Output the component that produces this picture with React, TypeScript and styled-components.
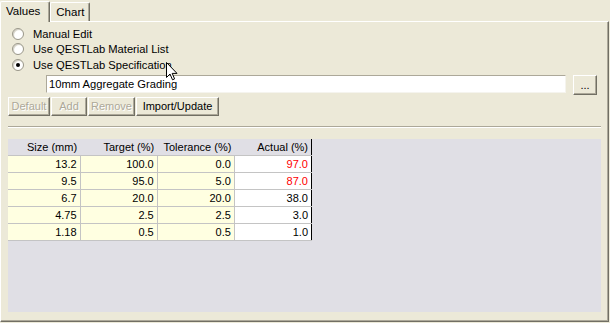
import React, { FC } from 'react'
import styled, { createGlobalStyle } from 'styled-components'

const color = {
  face: '#ece9d8',
  shadow: '#aca899',
  dark: '#716f64',
  white: '#ffffff',
  grid: '#e0dfe5',
  yellow: '#ffffe1',
  line: '#c4c4c4',
  disabled: '#aca899',
  red: '#ff0000',
}

const GlobalStyle = createGlobalStyle`
  html, body {
    margin: 0;
    padding: 0;
    background: ${color.face};
  }
  body {
    font-family: Tahoma, 'Liberation Sans', Arial, sans-serif;
    font-size: 11px;
    color: #000;
  }
`

type Row = { size: string; target: string; tolerance: string; actual: string; fail?: boolean }

const rows: Row[] = [
  { size: '13.2', target: '100.0', tolerance: '0.0', actual: '97.0', fail: true },
  { size: '9.5', target: '95.0', tolerance: '5.0', actual: '87.0', fail: true },
  { size: '6.7', target: '20.0', tolerance: '20.0', actual: '38.0' },
  { size: '4.75', target: '2.5', tolerance: '2.5', actual: '3.0' },
  { size: '1.18', target: '0.5', tolerance: '0.5', actual: '1.0' },
]

const options = ['Manual Edit', 'Use QESTLab Material List', 'Use QESTLab Specification']

const App: FC = () => {
  return (
    <Window>
      <GlobalStyle />
      <TabStrip>
        <Tab active>Values</Tab>
        <Tab>Chart</Tab>
      </TabStrip>
      <Panel>
        <RadioGroup>
          {options.map((label, i) => (
            <RadioRow key={label}>
              <Radio checked={i === 2} />
              <span>{label}</span>
            </RadioRow>
          ))}
        </RadioGroup>
        <SpecRow>
          <TextBox>10mm Aggregate Grading</TextBox>
          <Button width={24} height={20}>...</Button>
        </SpecRow>
        <ButtonRow>
          <Button width={42} disabled>Default</Button>
          <Button width={36} disabled>Add</Button>
          <Button width={47} disabled>Remove</Button>
          <Button width={83}>Import/Update</Button>
        </ButtonRow>
        <Separator />
        <GridArea>
          <Table>
            <colgroup>
              <col style={{ width: 72 }} />
              <col style={{ width: 77 }} />
              <col style={{ width: 77 }} />
              <col style={{ width: 77 }} />
            </colgroup>
            <thead>
              <tr>
                <Head>Size (mm)</Head>
                <Head>Target (%)</Head>
                <Head>Tolerance (%)</Head>
                <Head>Actual (%)</Head>
              </tr>
            </thead>
            <tbody>
              {rows.map((r) => (
                <tr key={r.size}>
                  <Cell>{r.size}</Cell>
                  <Cell>{r.target}</Cell>
                  <Cell>{r.tolerance}</Cell>
                  <Cell white fail={r.fail}>{r.actual}</Cell>
                </tr>
              ))}
            </tbody>
          </Table>
        </GridArea>
      </Panel>
      <Cursor width="12" height="19" viewBox="0 0 12 19">
        <path
          d="M0.5 0.5 L0.5 15.5 L4 12 L6.5 17.8 L8.6 16.9 L6.2 11.4 L11 11.4 Z"
          fill="#fff"
          stroke="#000"
          strokeWidth="1"
        />
      </Cursor>
    </Window>
  )
}

export default App

const Window = styled.div`
  position: relative;
  width: 610px;
  height: 323px;
  display: flex;
  flex-direction: column;
  overflow: hidden;
`

const TabStrip = styled.div`
  display: flex;
  align-items: flex-end;
  height: 21px;
  padding-left: 0;
  position: relative;
  z-index: 1;
`

const Tab = styled.div<{ active?: boolean }>`
  box-sizing: border-box;
  height: ${({ active }) => (active ? 21 : 19)}px;
  margin-bottom: ${({ active }) => (active ? -1 : 0)}px;
  padding: ${({ active }) => (active ? '2px 9px 0 5px' : '2px 5px 0 5px')};
  background: ${color.face};
  border-top: 1px solid ${color.white};
  border-left: 1px solid ${color.white};
  border-right: 1px solid ${color.dark};
  box-shadow: inset -1px 0 0 ${color.shadow};
  border-radius: 2px 2px 0 0;
  line-height: 15px;
  font-size: 11.5px;
`

const Panel = styled.div`
  flex: 1;
  box-sizing: border-box;
  display: flex;
  flex-direction: column;
  border-top: 1px solid ${color.white};
  border-left: 1px solid ${color.white};
  border-right: 1px solid ${color.dark};
  border-bottom: 1px solid ${color.dark};
  box-shadow: inset -1px -1px 0 ${color.shadow};
  padding: 4px 7px 9px 7px;
  margin-right: 1px;
  margin-bottom: 1px;
`

const RadioGroup = styled.div`
  display: flex;
  flex-direction: column;
  padding-left: 4px;
`

const RadioRow = styled.label`
  display: flex;
  align-items: center;
  gap: 9px;
  height: 15.5px;
  white-space: nowrap;
  font-size: 11.2px;
`

const Radio = styled.span<{ checked?: boolean }>`
  box-sizing: border-box;
  width: 12px;
  height: 12px;
  border-radius: 50%;
  background: radial-gradient(circle at 60% 60%, #ffffff 45%, #e2e0d6 100%);
  border: 1px solid #9a978a;
  box-shadow: inset 1px 1px 0 #d6d3c8;
  position: relative;
  &::after {
    content: '';
    display: ${({ checked }) => (checked ? 'block' : 'none')};
    position: absolute;
    left: 3px;
    top: 3px;
    width: 4px;
    height: 4px;
    border-radius: 50%;
    background: #000;
  }
`

const SpecRow = styled.div`
  display: flex;
  align-items: flex-start;
  gap: 7px;
  margin-top: 2px;
  padding-left: 38px;
  padding-right: 4px;
`

const TextBox = styled.div`
  flex: 1;
  box-sizing: border-box;
  height: 18px;
  background: ${color.white};
  border-top: 1px solid ${color.shadow};
  border-left: 1px solid ${color.shadow};
  border-right: 1px solid #f5f4ee;
  border-bottom: 1px solid #f5f4ee;
  padding: 1px 2px;
  line-height: 14px;
  font-size: 11.2px;
`

const Button = styled.div<{ width: number; height?: number; disabled?: boolean }>`
  box-sizing: border-box;
  width: ${({ width }) => width}px;
  height: ${({ height }) => height ?? 19}px;
  display: flex;
  align-items: center;
  justify-content: center;
  background: ${color.face};
  border-top: 1px solid ${color.white};
  border-left: 1px solid ${color.white};
  border-right: 1px solid ${color.dark};
  border-bottom: 1px solid ${color.dark};
  box-shadow: inset -1px -1px 0 ${color.shadow};
  color: ${({ disabled }) => (disabled ? color.disabled : '#000')};
  text-shadow: ${({ disabled }) => (disabled ? `1px 1px 0 ${color.white}` : 'none')};
  white-space: nowrap;
`

const ButtonRow = styled.div`
  display: flex;
  gap: 1px;
  margin-top: 2px;
`

const Separator = styled.div`
  height: 0;
  border-top: 1px solid ${color.shadow};
  border-bottom: 1px solid ${color.white};
  margin: 10px 0 11px 0;
`

const GridArea = styled.div`
  flex: 1;
  background: ${color.grid};
`

const Table = styled.table`
  border-collapse: collapse;
  table-layout: fixed;
  width: 304px;
  border-right: 1px solid #000;
  border-bottom: 1px solid #000;
`

const Head = styled.th`
  box-sizing: border-box;
  height: 16px;
  padding: 0 3px 0 0;
  text-align: right;
  font-weight: normal;
  line-height: 16px;
  border-bottom: 1px solid ${color.line};
`

const Cell = styled.td<{ white?: boolean; fail?: boolean }>`
  box-sizing: border-box;
  height: 17px;
  padding: 0 3px 0 0;
  text-align: right;
  line-height: 16px;
  background: ${({ white }) => (white ? color.white : color.yellow)};
  color: ${({ fail }) => (fail ? color.red : '#000')};
  border-right: 1px solid ${color.line};
  border-bottom: 1px solid ${color.line};
  &:last-child {
    border-right: none;
  }
`

const Cursor = styled.svg`
  position: absolute;
  left: 166px;
  top: 62px;
  pointer-events: none;
`
